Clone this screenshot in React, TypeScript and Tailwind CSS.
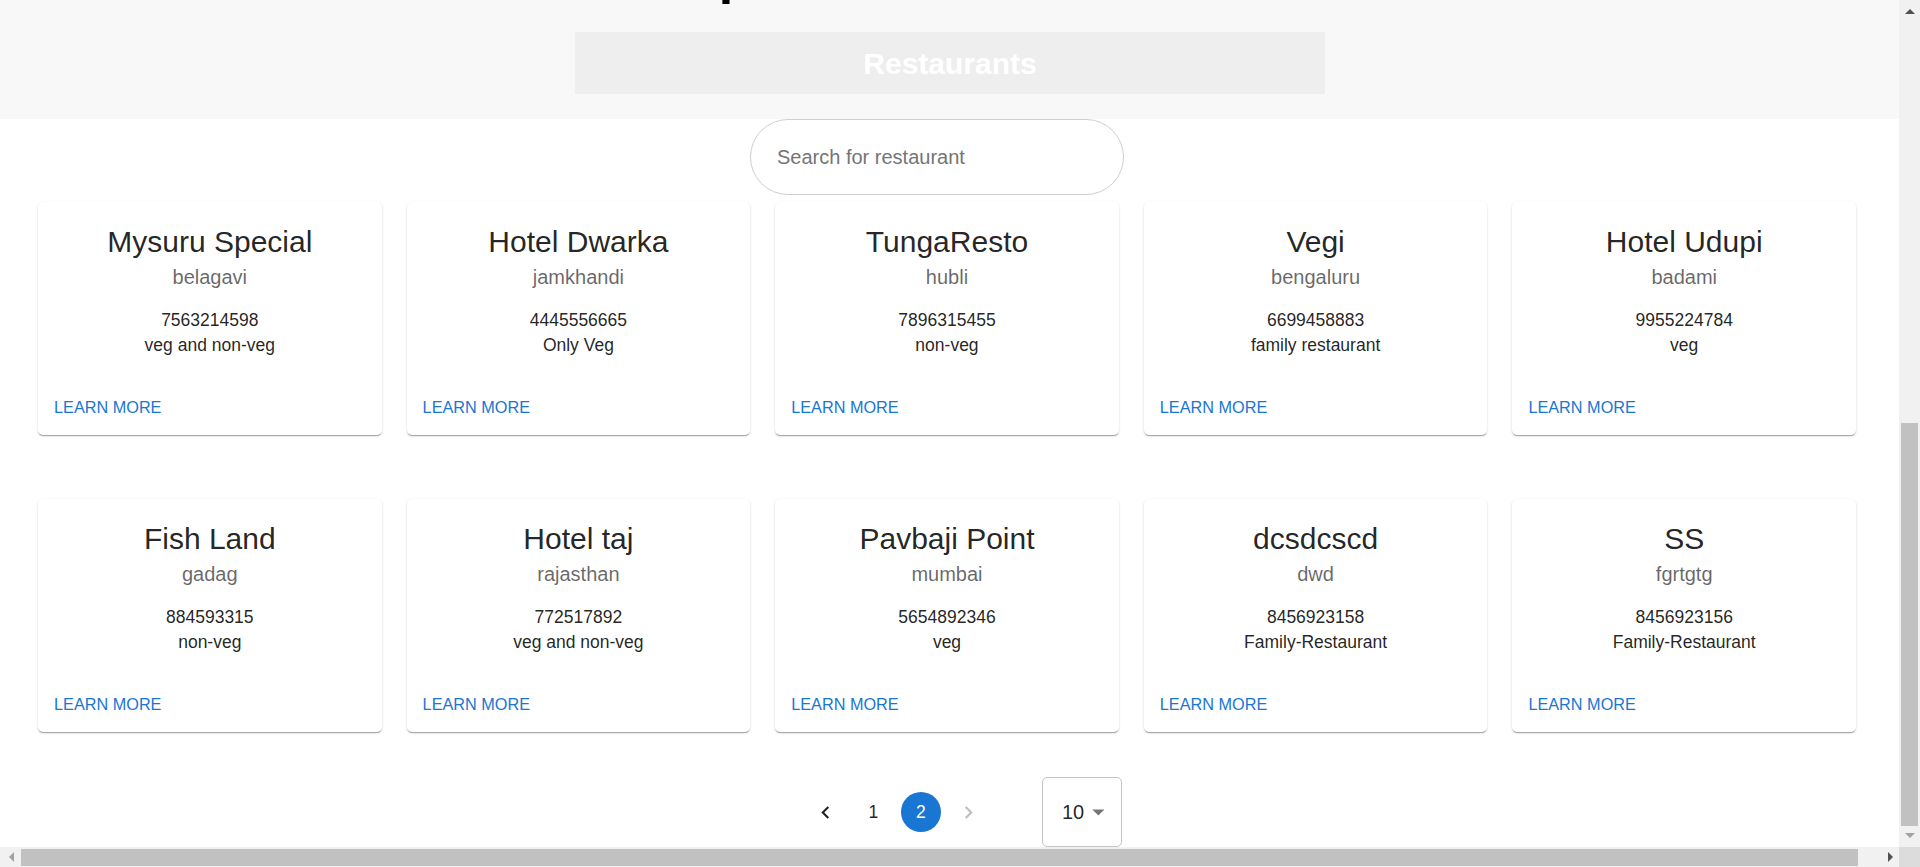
import * as React from 'react'

type Restaurant = {
  name: string
  city: string
  phone: string
  kind: string
}

const restaurants: Restaurant[] = [
  { name: 'Mysuru Special', city: 'belagavi', phone: '7563214598', kind: 'veg and non-veg' },
  { name: 'Hotel Dwarka', city: 'jamkhandi', phone: '4445556665', kind: 'Only Veg' },
  { name: 'TungaResto', city: 'hubli', phone: '7896315455', kind: 'non-veg' },
  { name: 'Vegi', city: 'bengaluru', phone: '6699458883', kind: 'family restaurant' },
  { name: 'Hotel Udupi', city: 'badami', phone: '9955224784', kind: 'veg' },
  { name: 'Fish Land', city: 'gadag', phone: '884593315', kind: 'non-veg' },
  { name: 'Hotel taj', city: 'rajasthan', phone: '772517892', kind: 'veg and non-veg' },
  { name: 'Pavbaji Point', city: 'mumbai', phone: '5654892346', kind: 'veg' },
  { name: 'dcsdcscd', city: 'dwd', phone: '8456923158', kind: 'Family-Restaurant' },
  { name: 'SS', city: 'fgrtgtg', phone: '8456923156', kind: 'Family-Restaurant' },
]

function RestaurantCard({ r }: { r: Restaurant }) {
  return (
    <div className="flex h-[233px] flex-col rounded-[5px] bg-white text-center shadow-[0_2px_1px_-1px_rgba(0,0,0,0.2),0_1px_1px_0_rgba(0,0,0,0.14),0_1px_3px_0_rgba(0,0,0,0.12)]">
      <div className="pt-[20px]">
        <div className="text-[30px] leading-[40px] text-[rgba(0,0,0,0.87)]">{r.name}</div>
        <div className="text-[20px] leading-[30px] text-[rgba(0,0,0,0.6)]">{r.city}</div>
        <div className="mt-[16px] text-[17.5px] leading-[25px] text-[rgba(0,0,0,0.87)]">{r.phone}</div>
        <div className="text-[17.5px] leading-[25px] text-[rgba(0,0,0,0.87)]">{r.kind}</div>
      </div>
      <div className="mt-auto flex px-[10px] pb-[10px]">
        <button className="h-[36px] px-[6px] text-[16.25px] uppercase text-[#1976d2]">Learn More</button>
      </div>
    </div>
  )
}

// classic browser scrollbar arrows
function Arrow({ dir, dim }: { dir: 'up' | 'down' | 'left' | 'right'; dim?: boolean }) {
  const fill = dim ? '#a3a3a3' : '#505050'
  const pts = {
    up: '0,5 5,0 10,5',
    down: '0,0 10,0 5,5',
    left: '5,0 5,10 0,5',
    right: '0,0 0,10 5,5',
  }[dir]
  const vertical = dir === 'up' || dir === 'down'
  return (
    <svg width={vertical ? 10 : 5} height={vertical ? 5 : 10} viewBox={vertical ? '0 0 10 5' : '0 0 5 10'}>
      <polygon points={pts} fill={fill} />
    </svg>
  )
}

export default function App() {
  return (
    <div className="flex h-screen w-screen flex-col overflow-hidden bg-white font-['Liberation_Sans',Arial,sans-serif]">
      <div className="flex min-h-0 flex-1">
        <main className="min-w-0 flex-1 overflow-hidden">
          {/* header band, scrolled so only the bottom of the title shows */}
          <div className="h-[119px] bg-[#f8f8f8]">
            <div className="h-[32px] overflow-hidden">
              <h1 className="-mt-[55px] ml-[659px] whitespace-nowrap text-[52px] leading-[60px] font-bold text-black">
                Top Restaurants
              </h1>
            </div>
            <div className="ml-[575px] flex h-[62px] w-[750px] items-center justify-center bg-[#eeeeee]">
              <span className="text-[30px] font-bold text-white">Restaurants</span>
            </div>
          </div>

          <div className="ml-[750px] w-[374px]">
            <input
              className="h-[76px] w-full rounded-[38px] border border-[#cfcfcf] bg-white pl-[26px] text-[20px] text-[rgba(0,0,0,0.87)] outline-none placeholder:text-[#757575]"
              placeholder="Search for restaurant"
            />
          </div>

          <div className="ml-[38px] mt-[7px] grid w-[1818px] grid-cols-5 gap-x-[25px] gap-y-[64px]">
            {restaurants.map((r) => (
              <RestaurantCard key={r.name} r={r} />
            ))}
          </div>

          {/* pagination + page size */}
          <div className="ml-[802px] mt-[45px] flex h-[70px] items-center">
            <button className="mx-[3.75px] flex h-[40px] w-[40px] items-center justify-center rounded-full text-[rgba(0,0,0,0.87)]">
              <svg width="25" height="25" viewBox="0 0 24 24" fill="currentColor">
                <path d="M15.41 7.41 14 6l-6 6 6 6 1.41-1.41L10.83 12z" />
              </svg>
            </button>
            <button className="mx-[3.75px] flex h-[40px] w-[40px] items-center justify-center rounded-full text-[17.5px] text-[rgba(0,0,0,0.87)]">
              1
            </button>
            <button className="mx-[3.75px] flex h-[40px] w-[40px] items-center justify-center rounded-full bg-[#1976d2] text-[17.5px] text-white">
              2
            </button>
            <button className="mx-[3.75px] flex h-[40px] w-[40px] items-center justify-center rounded-full text-[rgba(0,0,0,0.26)]">
              <svg width="25" height="25" viewBox="0 0 24 24" fill="currentColor">
                <path d="M10 6 8.59 7.41 13.17 12l-4.58 4.59L10 18l6-6z" />
              </svg>
            </button>
            <div className="ml-[50px] flex h-[70px] w-[80px] items-center rounded-[5px] border border-[#c4c4c4] pl-[19px]">
              <span className="text-[20px] text-[rgba(0,0,0,0.87)]">10</span>
              <svg className="ml-auto mr-[8px] text-[rgba(0,0,0,0.54)]" width="30" height="30" viewBox="0 0 24 24" fill="currentColor">
                <path d="M7 10l5 5 5-5z" />
              </svg>
            </div>
          </div>
        </main>

        {/* vertical scrollbar */}
        <div className="flex w-[21px] flex-col bg-[#f1f1f1]">
          <div className="flex h-[21px] items-center justify-center pt-[1px]">
            <Arrow dir="up" />
          </div>
          <div className="flex flex-1 flex-col justify-end">
            <div className="mx-[2px] h-[403px] bg-[#c1c1c1]" />
          </div>
          <div className="flex h-[21px] items-center justify-center pb-[3px]">
            <Arrow dir="down" dim />
          </div>
        </div>
      </div>

      {/* horizontal scrollbar */}
      <div className="flex h-[20px] bg-[#f1f1f1]">
        <div className="flex w-[21px] items-center justify-center pl-[1px]">
          <Arrow dir="left" dim />
        </div>
        <div className="flex flex-1 pb-[1px] pr-[20px] pt-[2px]">
          <div className="flex-1 bg-[#c1c1c1]" />
        </div>
        <div className="flex w-[21px] items-center justify-center pl-[4px]">
          <Arrow dir="right" />
        </div>
        <div className="w-[21px] bg-[#dcdcdc]" />
      </div>
    </div>
  )
}
